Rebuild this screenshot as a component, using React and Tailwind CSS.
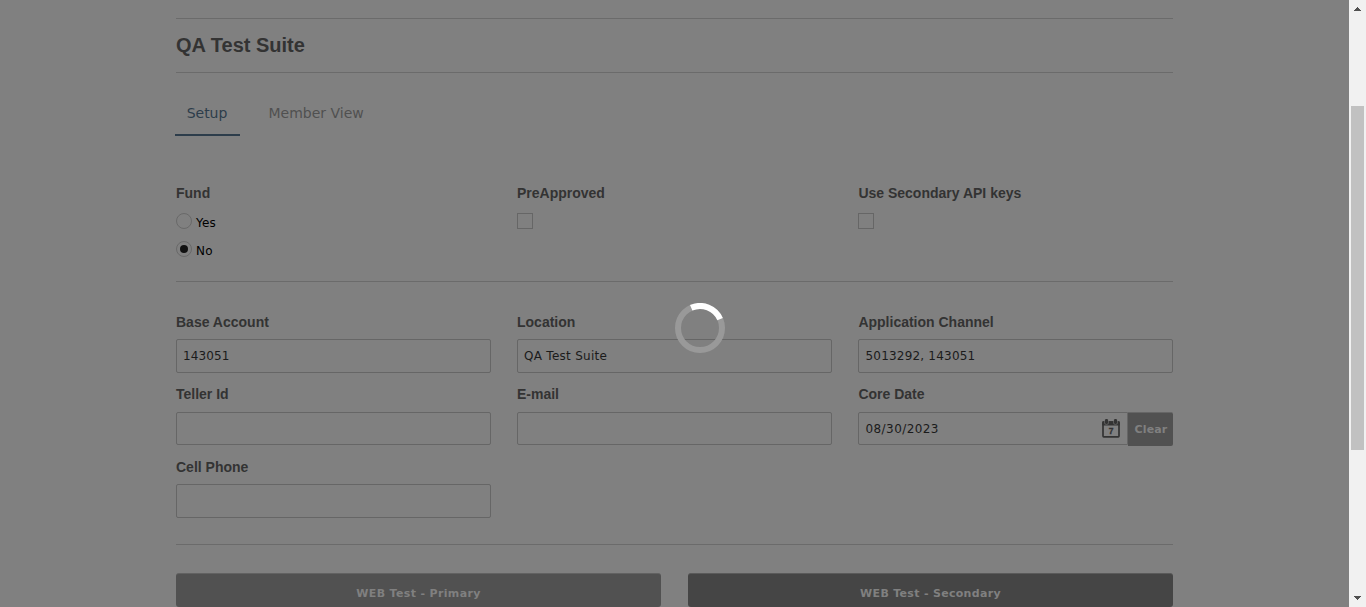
import React from "react";

const verdana = "font-['DejaVu_Sans',sans-serif]";

function Label({ children, className = "" }) {
  return (
    <div className={`h-5 text-[14px] leading-5 font-bold text-[#333333] whitespace-nowrap ${className}`}>{children}</div>
  );
}

function Field({ label, value, valueClass = "", labelClass = "", boxClass = "mt-[7px] h-[34px]" }) {
  return (
    <div className="w-[315px]">
      <Label className={labelClass}>{label}</Label>
      <div className={`flex items-center rounded-[2px] border border-[#666666] pl-[6px] text-[12px] text-[#1b1b1b] ${verdana} ${boxClass}`}>
        <span className={valueClass}>{value}</span>
      </div>
    </div>
  );
}

function Radio({ label, checked }) {
  return (
    <div className="flex h-7 items-start">
      <span className="flex size-4 items-center justify-center rounded-full border border-[#696969]">
        {checked && <span className="size-2 rounded-full bg-[#111111]" />}
      </span>
      <span className={`ml-1 mt-0.5 text-[12px] leading-4 tracking-[0.2px] text-black ${verdana}`}>{label}</span>
    </div>
  );
}

function CalendarIcon() {
  return (
    <svg width="18" height="19" viewBox="0 0 18 19" className="shrink-0">
      <rect x="1" y="3" width="16" height="14.8" rx="0.8" fill="none" stroke="#333333" strokeWidth="1.7" />
      <rect x="0.3" y="2.2" width="17.4" height="4.3" rx="0.6" fill="#333333" />
      <rect x="2.4" y="0" width="4.2" height="5.4" rx="1.5" fill="#747474" />
      <rect x="11.4" y="0" width="4.2" height="5.4" rx="1.5" fill="#747474" />
      <rect x="3" y="0" width="3" height="5" rx="1.2" fill="#333333" />
      <rect x="12" y="0" width="3" height="5" rx="1.2" fill="#333333" />
      <text x="9" y="14.8" textAnchor="middle" fontFamily="Liberation Sans, sans-serif" fontWeight="700" fontSize="8.5" fill="#333333" stroke="#333333" strokeWidth="0.3">7</text>
    </svg>
  );
}

export default function App() {
  return (
    <div className="relative flex h-[607px] w-[1366px] overflow-hidden bg-[#808080] font-['Liberation_Sans',sans-serif]">
      <main className="w-[1349px] pl-[176px] pt-[18px]">
        <div className="w-[997px]">
          <h1 className="flex h-[55px] items-center border-y border-[#6b6b6b] pb-0.5 text-[20px] font-bold text-[#333333]">
            QA Test Suite
          </h1>

          <nav className={`-ml-px flex pt-[26px] text-[14px] ${verdana}`}>
            <div className="flex h-[37px] w-[65px] justify-center border-b-2 border-[#2d3d4b] pt-1 pr-px leading-5 text-[#2d3d4b]">
              Setup
            </div>
            <div className="ml-7 pl-[0.5px] pt-1 leading-5 text-[#505050] whitespace-nowrap">Member View</div>
          </nav>

          <section className="flex h-[146px] gap-[26px] border-b border-[#6b6b6b] pt-[47px]">
            <div className="w-[315px]">
              <Label>Fund</Label>
              <div className="pt-[10px]">
                <Radio label="Yes" />
                <Radio label="No" checked />
              </div>
            </div>
            <div className="w-[315px]">
              <Label>PreApproved</Label>
              <div className="mt-[10px] size-4 border border-[#666666]" />
            </div>
            <div className="w-[315px]">
              <Label className="pl-[0.4px]">Use Secondary API keys</Label>
              <div className="mt-[10px] size-4 border border-[#666666]" />
            </div>
          </section>

          <section className="flex h-[263px] flex-col border-b border-[#6b6b6b] pt-[30px]">
            <div className="flex h-[72px] gap-[26px]">
              <Field label="Base Account" value="143051" valueClass="tracking-[0.1px]" />
              <Field label="Location" value="QA Test Suite" valueClass="tracking-[0.28px]" />
              <Field label="Application Channel" labelClass="pl-[0.4px]" value="5013292, 143051" valueClass="pl-[0.5px] tracking-[0.2px]" />
            </div>
            <div className="flex h-[73px] gap-[26px]">
              <Field label="Teller Id" boxClass="mt-2 h-[33px]" />
              <Field label="E-mail" boxClass="mt-2 h-[33px]" />
              <div className="w-[315px]">
                <Label className="pl-[0.4px]">Core Date</Label>
                <div className="mt-2 flex items-start">
                  <div className={`flex h-[33px] w-[270px] items-center justify-between rounded-l-[2px] border border-[#666666] pl-[6px] pr-[7px] text-[12px] text-[#1b1b1b] ${verdana}`}>
                    <span className="pl-[0.5px] tracking-[0.42px]">08/30/2023</span>
                    <CalendarIcon />
                  </div>
                  <div className={`flex h-[34px] w-[45px] items-center justify-center rounded-r-[2px] border-t border-[#666666] bg-[#515151] pl-px pt-px text-[11px] font-bold tracking-[0.15px] text-[#808080] ${verdana}`}>
                    Clear
                  </div>
                </div>
              </div>
            </div>
            <Field label="Cell Phone" />
          </section>

          <div className={`flex gap-[27px] pt-7 text-[11px] font-bold tracking-[0.35px] text-[#808080] ${verdana}`}>
            <div className="flex h-[34px] w-[485px] items-center justify-center rounded-[3px] border-t border-[#626262] bg-[#515151] pt-[7px]">WEB Test - Primary</div>
            <div className="flex h-[34px] w-[485px] items-center justify-center rounded-[3px] border-t border-[#5a5a5a] bg-[#454545] pt-[7px] tracking-[0.31px]">WEB Test - Secondary</div>
          </div>
        </div>
      </main>

      <aside className="flex h-full w-[17px] flex-col items-center bg-[#f1f1f1]">
        <svg width="17" height="17" viewBox="0 0 17 17" shapeRendering="crispEdges" fill="#505050">
          <path d="M8 7h1v1h1v1h1v1h1v1H5v-1h1V9h1V8h1z" />
        </svg>
        <div className="mt-[89px] h-[344px] w-[13px] bg-[#c1c1c1]" />
        <svg className="mt-auto" width="17" height="17" viewBox="0 0 17 17" shapeRendering="crispEdges" fill="#505050">
          <path d="M5 6h7v1h-1v1h-1v1H9v1H8V9H7V8H6V7H5z" />
        </svg>
      </aside>

      <svg className="absolute left-[675px] top-[303px]" width="50" height="50" viewBox="0 0 50 50" fill="none" strokeWidth="6">
        <circle cx="25" cy="25" r="22" stroke="#999999" />
        <path d="M16.2 4.8A22 22 0 0 1 45.1 16.1" stroke="#ffffff" />
      </svg>
    </div>
  );
}
